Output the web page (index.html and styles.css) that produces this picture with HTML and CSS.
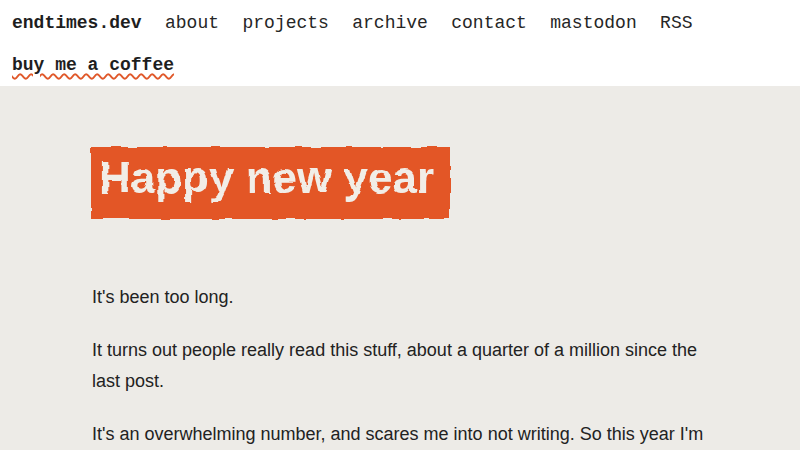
FILE: index.html
```html
<!DOCTYPE html>
<html lang="en">
<head>
<meta charset="utf-8">
<title>Happy new year - endtimes.dev</title>
<link rel="stylesheet" href="styles.css">
</head>
<body>
<svg class="defs" width="0" height="0" aria-hidden="true">
  <filter id="rough" x="-5%" y="-10%" width="110%" height="120%">
    <feTurbulence type="fractalNoise" baseFrequency="0.06 0.12" numOctaves="1" seed="4" result="noise"/>
    <feDisplacementMap in="SourceGraphic" in2="noise" scale="4" xChannelSelector="R" yChannelSelector="G"/>
  </filter>
</svg>
<header class="site-header">
  <nav class="nav">
    <a class="nav-link brand" href="#">endtimes.dev</a>
    <a class="nav-link" href="#">about</a>
    <a class="nav-link" href="#">projects</a>
    <a class="nav-link" href="#">archive</a>
    <a class="nav-link" href="#">contact</a>
    <a class="nav-link" href="#">mastodon</a>
    <a class="nav-link" href="#">RSS</a>
    <a class="nav-link coffee" href="#">buy me a coffee</a>
  </nav>
</header>
<main class="post">
  <h1 class="post-title">Happy new year</h1>
  <p>It's been too long.</p>
  <p>It turns out people really read this stuff, about a quarter of a million since the last post.</p>
  <p>It's an overwhelming number, and scares me into not writing. So this year I'm going to try something different.</p>
</main>
</body>
</html>
```
FILE: styles.css
```css
html, body {
  margin: 0;
  padding: 0;
}
body {
  background: #edebe7;
  color: #222222;
  font-family: "Liberation Sans", Arial, sans-serif;
}
.defs {
  position: absolute;
  width: 0;
  height: 0;
}
.site-header {
  background: #ffffff;
  padding: 10px 12px 7px;
}
.nav {
  display: flex;
  flex-wrap: wrap;
  column-gap: 23.4px;
  row-gap: 15px;
  font-family: "Liberation Mono", "Courier New", monospace;
  font-size: 18px;
  line-height: 27px;
}
.nav-link {
  color: #262626;
  text-decoration: none;
}
.brand {
  font-weight: 700;
  color: #1e1e1e;
}
.coffee {
  font-weight: 700;
  color: #1e1e1e;
  text-decoration: underline wavy #e0582a;
  text-decoration-thickness: 1.5px;
  text-underline-offset: 3px;
}
.post {
  max-width: 616px;
  margin: 0 auto;
  padding-top: 61px;
}
.post-title {
  display: inline-block;
  margin: 0 0 63px -1px;
  padding: 6px 16px 15px 8px;
  background: #e35626;
  color: #f1ede7;
  font-family: "Liberation Sans", Arial, sans-serif;
  font-weight: 700;
  font-size: 44px;
  line-height: 1.15;
  filter: url(#rough);
}
.post p {
  font-size: 18px;
  line-height: 31px;
  margin: 0 0 22px;
}
```
